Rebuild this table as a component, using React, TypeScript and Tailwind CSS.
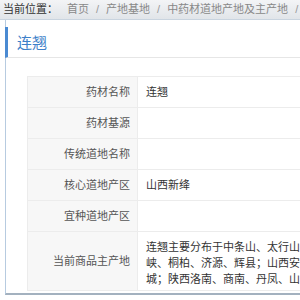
import React from "react";

const rows: { label: string; value?: string[] }[] = [
  { label: "药材名称", value: ["连翘"] },
  { label: "药材基源" },
  { label: "传统道地名称" },
  { label: "核心道地产区", value: ["山西新绛"] },
  { label: "宜种道地产区" },
];

const lastLines = [
  "连翘主要分布于中条山、太行山、王屋山一带；河南卢氏、灵宝、陕县、三门",
  "峡、桐柏、济源、辉县；山西安泽、沁水、陵川、阳城、晋",
  "城；陕西洛南、商南、丹凤、山阳、宜川、黄龙等地。",
];

export default function App() {
  return (
    <div className="w-[300px] h-[300px] overflow-hidden bg-white font-['Liberation_Sans','Noto_Sans_CJK_SC',sans-serif]">
      <div className="w-[640px]">
        <div className="h-[20px] flex items-center pl-[3px] text-[11px] leading-none bg-gradient-to-b from-[#f3f4f6] to-[#e1e5e9] border-b border-[#c9d4df] whitespace-nowrap">
          <span className="text-[#333]">当前位置：</span>
          <span className="ml-[9px] text-[#888]">首页</span>
          <span className="mx-[7px] text-[#999]">/</span>
          <span className="text-[#888]">产地基地</span>
          <span className="mx-[7px] text-[#999]">/</span>
          <span className="text-[#888]">中药材道地产地及主产地</span>
          <span className="mx-[7px] text-[#999]">/</span>
        </div>
        <div className="ml-[5px] border-l border-[#b7cbe0] border-b-2 border-b-[#a3b1bf] pt-[7px] pb-[2px]">
          <div className="h-[31px] -ml-px border-l-[3px] border-l-[#4a8ad2] border-b border-b-[#e6e6e6] flex items-center pl-[9px]">
            <span className="text-[15px] text-[#3d80c9] leading-none">连翘</span>
          </div>
          <div className="mt-[18px] ml-[21px] border-t border-l border-[#ececec] text-[11px]">
            {rows.map((r) => (
              <div key={r.label} className="flex h-[31px] border-b border-[#ececec]">
                <div className="w-[110px] shrink-0 bg-[#f7f7f7] border-r border-[#ececec] flex items-center justify-end pr-[7px] text-[#555]">
                  {r.label}
                </div>
                <div className="flex-1 flex items-center pl-[8px] text-[#333] bg-white">
                  {r.value?.join("")}
                </div>
              </div>
            ))}
            <div className="flex h-[59px] border-b border-[#ececec]">
              <div className="w-[110px] shrink-0 bg-[#f7f7f7] border-r border-[#ececec] flex items-center justify-end pr-[7px] text-[#555]">
                当前商品主产地
              </div>
              <div className="flex-1 flex flex-col justify-center pl-[8px] pt-[3px] text-[#333] leading-[16px] bg-white whitespace-nowrap">
                {lastLines.map((l) => (
                  <div key={l}>{l}</div>
                ))}
              </div>
            </div>
          </div>
        </div>
      </div>
    </div>
  );
}
